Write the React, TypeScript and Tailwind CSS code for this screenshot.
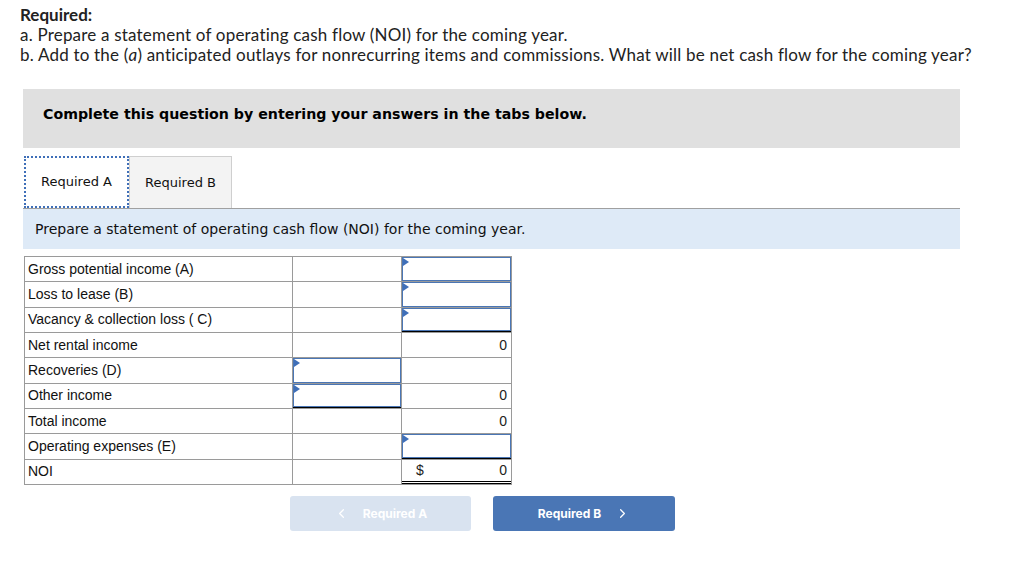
import React from "react";
import { ChevronLeft, ChevronRight } from "lucide-react";

type Cell = { input?: boolean; value?: string; dollar?: boolean; under?: "single" | "double" };
type Row = { label: string; mid: Cell; right: Cell };

const rows: Row[] = [
  { label: "Gross potential income (A)", mid: {}, right: { input: true } },
  { label: "Loss to lease (B)", mid: {}, right: { input: true } },
  { label: "Vacancy & collection loss ( C)", mid: {}, right: { input: true, under: "single" } },
  { label: "Net rental income", mid: {}, right: { value: "0" } },
  { label: "Recoveries (D)", mid: { input: true }, right: {} },
  { label: "Other income", mid: { input: true, under: "single" }, right: { value: "0" } },
  { label: "Total income", mid: {}, right: { value: "0" } },
  { label: "Operating expenses (E)", mid: {}, right: { input: true, under: "single" } },
  { label: "NOI", mid: {}, right: { value: "0", dollar: true, under: "double" } },
];

function Flag() {
  return (
    <svg className="absolute left-0 top-0" width="6" height="8" viewBox="0 0 6 8">
      <polygon points="0,0 6,4 0,8" fill="#3f6fb8" />
    </svg>
  );
}

function ValueCell({ cell, w }: { cell: Cell; w: string }) {
  const under =
    cell.under === "double"
      ? "border-b-[3px] border-double border-b-black"
      : cell.under === "single"
      ? "border-b border-b-black"
      : "";
  return (
    <td className={`${w} border border-[#9a9a9a] p-0 h-[25.35px]`}>
      <div className={`relative h-[24.3px] ${under}`}>
        {cell.input && (
          <div className="absolute inset-0 border-[1.5px] border-[#4a76b5]">
            <Flag />
          </div>
        )}
        {cell.value && (
          <div className="flex h-full items-center justify-between pr-[4px] text-[14px] text-[#222]">
            <span className="pl-[14px]">{cell.dollar ? "$" : ""}</span>
            <span>{cell.value}</span>
          </div>
        )}
      </div>
    </td>
  );
}

function App() {
  return (
    <div className="w-[1024px] h-[577px] bg-white overflow-hidden">
      {/* Aufgabenstellung */}
      <div className="pl-[20px] pt-[5px] font-['Lato',sans-serif] text-[17px] tracking-[0.2px] leading-[20px] text-[#222]">
        <div className="font-bold tracking-normal">Required:</div>
        <div>a. Prepare a statement of operating cash flow (NOI) for the coming year.</div>
        <div>
          b. Add to the (<i>a</i>) anticipated outlays for nonrecurring items and commissions. What will be net cash flow for the coming year?
        </div>
      </div>

      <div className="ml-[23px] mt-[24px] w-[937px] h-[59px] bg-[#e0e0e0] flex items-start pt-[15px] pl-[20px] font-['DejaVu_Sans',sans-serif] font-bold text-[14.2px] text-black">
        Complete this question by entering your answers in the tabs below.
      </div>

      {/* Tabs */}
      <div className="ml-[24px] mt-[8px] flex font-['DejaVu_Sans',sans-serif] text-[13px] text-[#111]">
        <div className="w-[105px] h-[52px] flex items-center justify-center bg-white border-2 border-dotted border-[#3f6fb8]">
          Required A
        </div>
        <div className="w-[103px] h-[52px] flex items-center justify-center bg-[#f3f3f3] border border-[#cfcfcf] border-b-0">
          Required B
        </div>
      </div>
      <div className="ml-[23px] w-[937px] h-[41px] bg-[#deeaf7] border-t border-[#a0a0a0] flex items-center pl-[12px] font-['DejaVu_Sans',sans-serif] text-[14px] text-[#111]">
        Prepare a statement of operating cash flow (NOI) for the coming year.
      </div>

      {/* Tabelle */}
      <table className="ml-[24px] mt-[7px] border-collapse table-fixed w-[488px] font-['Liberation_Sans',sans-serif] text-[14px] text-[#111]">
        <tbody>
          {rows.map((r) => (
            <tr key={r.label}>
              <td className="w-[268px] border border-[#9a9a9a] pl-[3px] h-[25.35px]">{r.label}</td>
              <ValueCell cell={r.mid} w="w-[109px]" />
              <ValueCell cell={r.right} w="w-[110px]" />
            </tr>
          ))}
        </tbody>
      </table>

      {/* Navigation */}
      <div className="mt-[11px] ml-[290px] flex gap-[22px] font-['Inter',sans-serif] font-bold text-[12px] text-white">
        <div className="w-[181px] h-[35px] rounded-[3px] bg-[#d9e3f0] flex items-center justify-center gap-[14px]">
          <ChevronLeft size={15} strokeWidth={2} />
          <span>Required A</span>
        </div>
        <div className="w-[182px] h-[35px] rounded-[3px] bg-[#4a76b5] flex items-center justify-center gap-[14px]">
          <span>Required B</span>
          <ChevronRight size={15} strokeWidth={2} />
        </div>
      </div>
    </div>
  );
}

export default App;
